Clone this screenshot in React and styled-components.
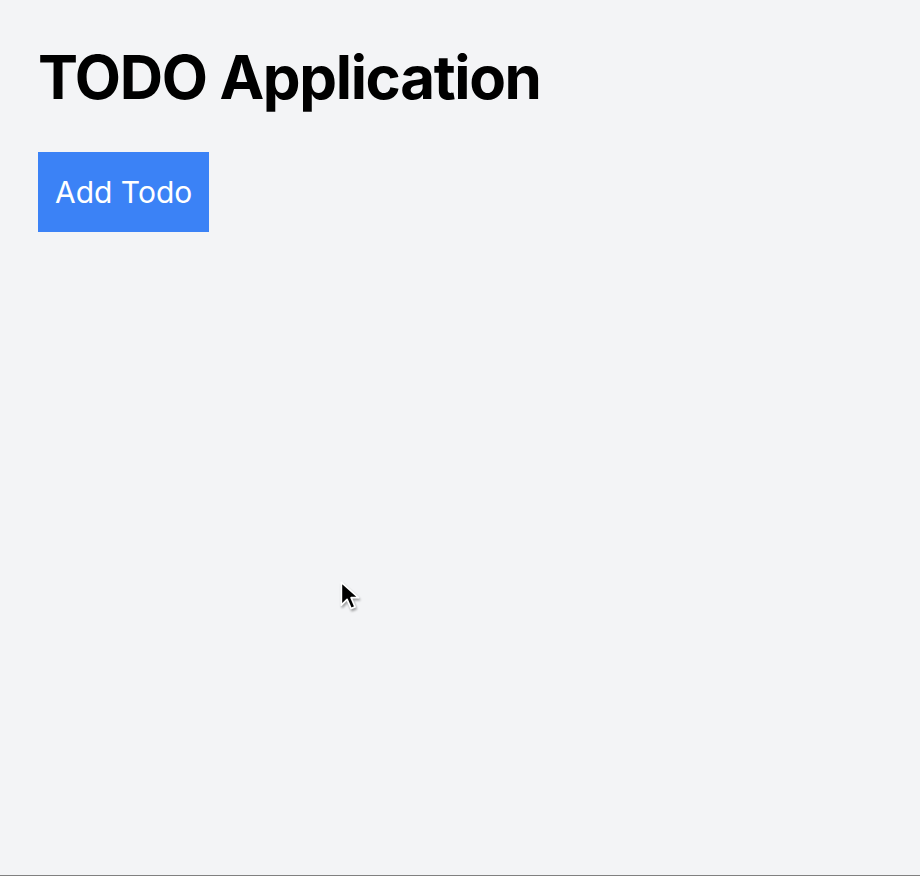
import React from "react";
import styled, { createGlobalStyle } from "styled-components";

const GlobalStyle = createGlobalStyle`
  html, body {
    margin: 0;
    padding: 0;
    background: #f3f4f6;
  }
  * {
    box-sizing: border-box;
  }
`;

const App = () => {
  return (
    <>
      <GlobalStyle />
      <Page>
        <Title>TODO Application</Title>
        <AddButton>Add Todo</AddButton>
        <Cursor viewBox="0 0 20 28" aria-hidden="true">
          <path
            d="M2 2 L2 22 L7 17 L10.5 25 L14 23.5 L10.5 15.5 L17 15.5 Z"
            fill="#000"
            stroke="#fff"
            strokeWidth="1.5"
            strokeLinejoin="round"
          />
        </Cursor>
      </Page>
    </>
  );
};

export default App;

const Page = styled.div`
  position: relative;
  min-height: 876px;
  padding: 47px 38px;
  display: flex;
  flex-direction: column;
  align-items: flex-start;
  gap: 45px;
  border-bottom: 1px solid #808080;
  font-family: Inter, "Liberation Sans", sans-serif;
`;

const Title = styled.h1`
  margin: 0;
  font-size: 60px;
  line-height: 1;
  font-weight: 700;
  letter-spacing: -1.35px;
  color: #000;
`;

const AddButton = styled.button`
  height: 80px;
  padding: 0 17px;
  border: none;
  background: #3b82f6;
  color: #fff;
  font-family: inherit;
  font-size: 30px;
  cursor: pointer;
`;

const Cursor = styled.svg`
  position: absolute;
  left: 339px;
  top: 580px;
  width: 23px;
  height: 32px;
  filter: drop-shadow(1px 2px 1px rgba(0, 0, 0, 0.35));
`;
